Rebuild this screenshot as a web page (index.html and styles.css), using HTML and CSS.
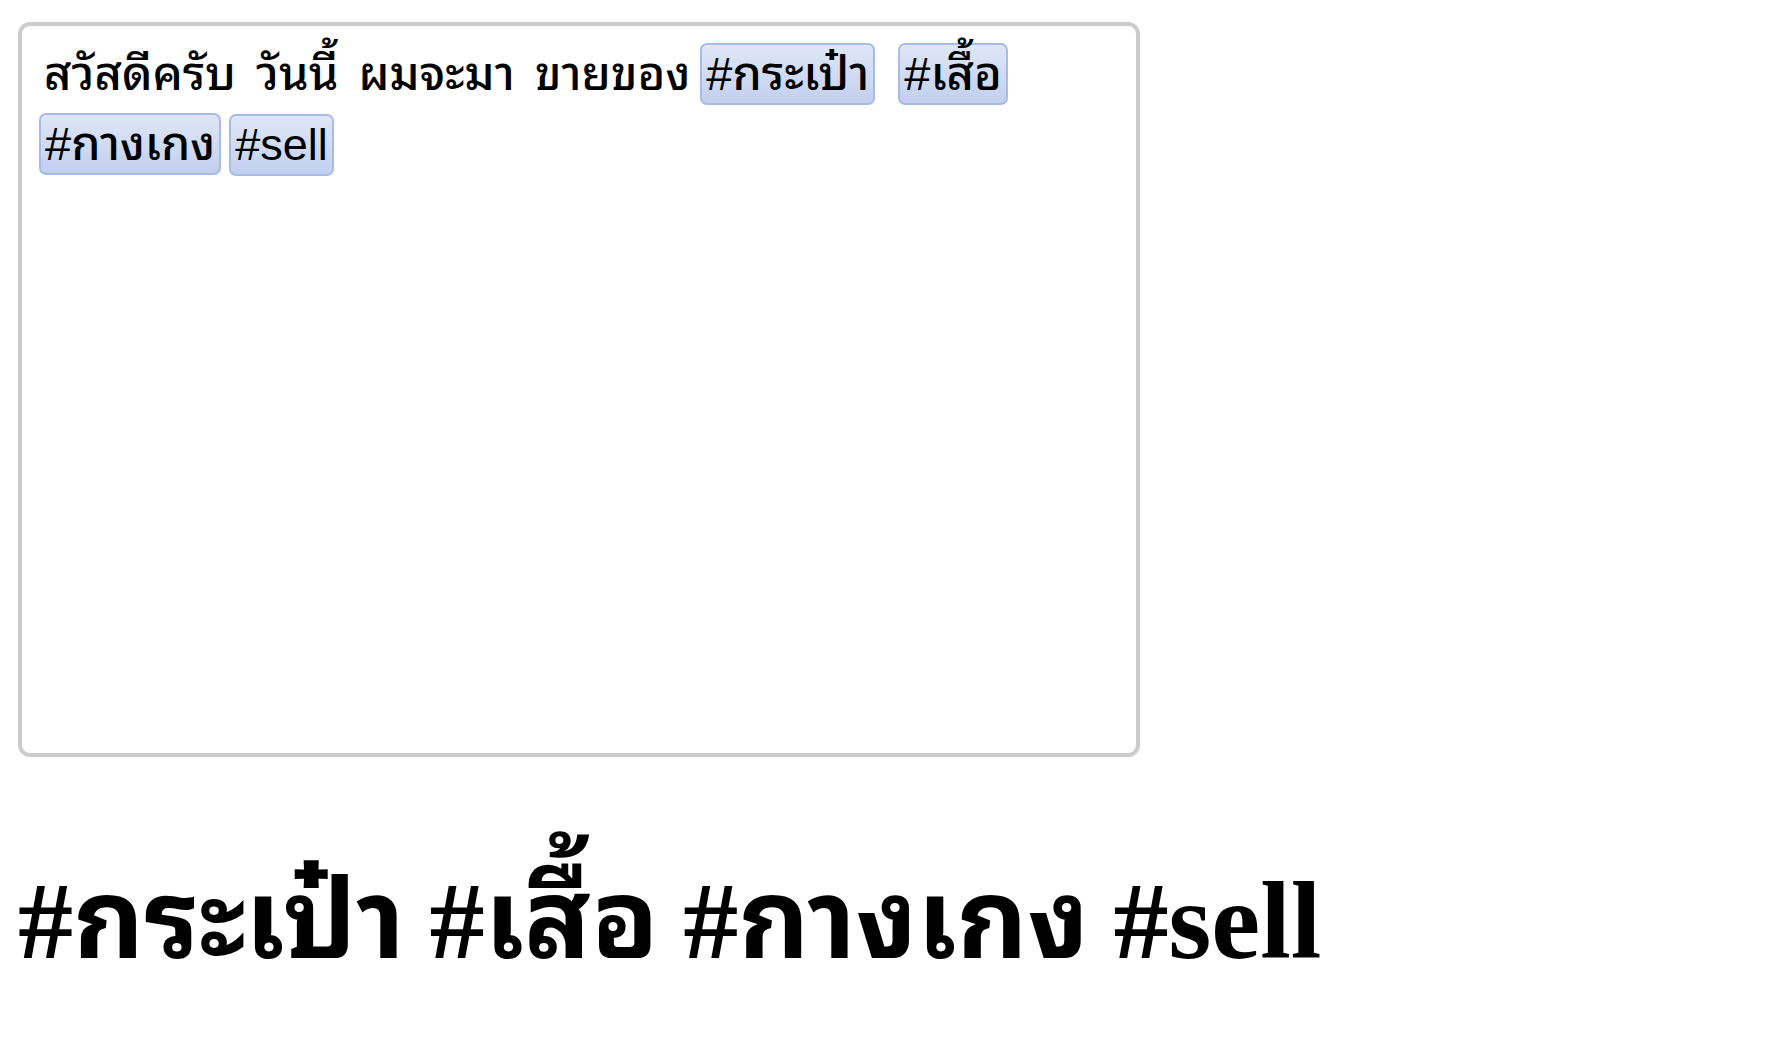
FILE: index.html
```html
<!DOCTYPE html>
<html lang="th">
<head>
<meta charset="utf-8">
<title>Hashtag editor</title>
<link rel="stylesheet" href="styles.css">
</head>
<body>
<div class="editor">
  <div class="content">สวัสดีครับ วันนี้ ผมจะมา ขายของ<span class="tag tag-first">#กระเป๋า</span><span class="tag tag-wide">#เสื้อ</span><br><span class="tag tag-start">#กางเกง</span><span class="tag tag-next">#sell</span></div>
</div>
<h1 class="tags-title">#กระเป๋า #เสื้อ #กางเกง #sell</h1>
</body>
</html>
```
FILE: styles.css
```css
html, body {
  margin: 0;
  background: #ffffff;
}
body {
  padding: 22px 0 0 18px;
  color: #000;
}
.editor {
  box-sizing: border-box;
  width: 1122px;
  height: 735px;
  border: 4px solid #cccccc;
  border-radius: 12px;
  padding: 13px 17px;
  background: #fff;
}
.content {
  font-family: "Liberation Sans", "Noto Sans Thai Looped", "Loma", sans-serif;
  font-weight: 500;
  font-size: 47px;
  line-height: 70px;
  word-spacing: 7px;
  padding-left: 5px;
}
.tag {
  display: inline-block;
  box-sizing: border-box;
  height: 62px;
  line-height: 58px;
  padding: 0 4px;
  border: 2px solid #a6bce6;
  border-radius: 7px;
  background: linear-gradient(#dfe6f6, #c2cfee);
  vertical-align: baseline;
}
.tag-first { margin-left: 10px; }
.tag-wide { margin-left: 23px; }
.tag-start { margin-left: -5px; }
.tag-next {
  margin-left: 8px;
  font-size: 45px;
}
.tags-title {
  margin: 104px 0 0 0;
  font-family: "Liberation Serif", "Noto Sans Thai Looped", "Loma", serif;
  font-weight: bold;
  font-size: 110px;
  line-height: 120px;
  word-spacing: -3px;
}
```
